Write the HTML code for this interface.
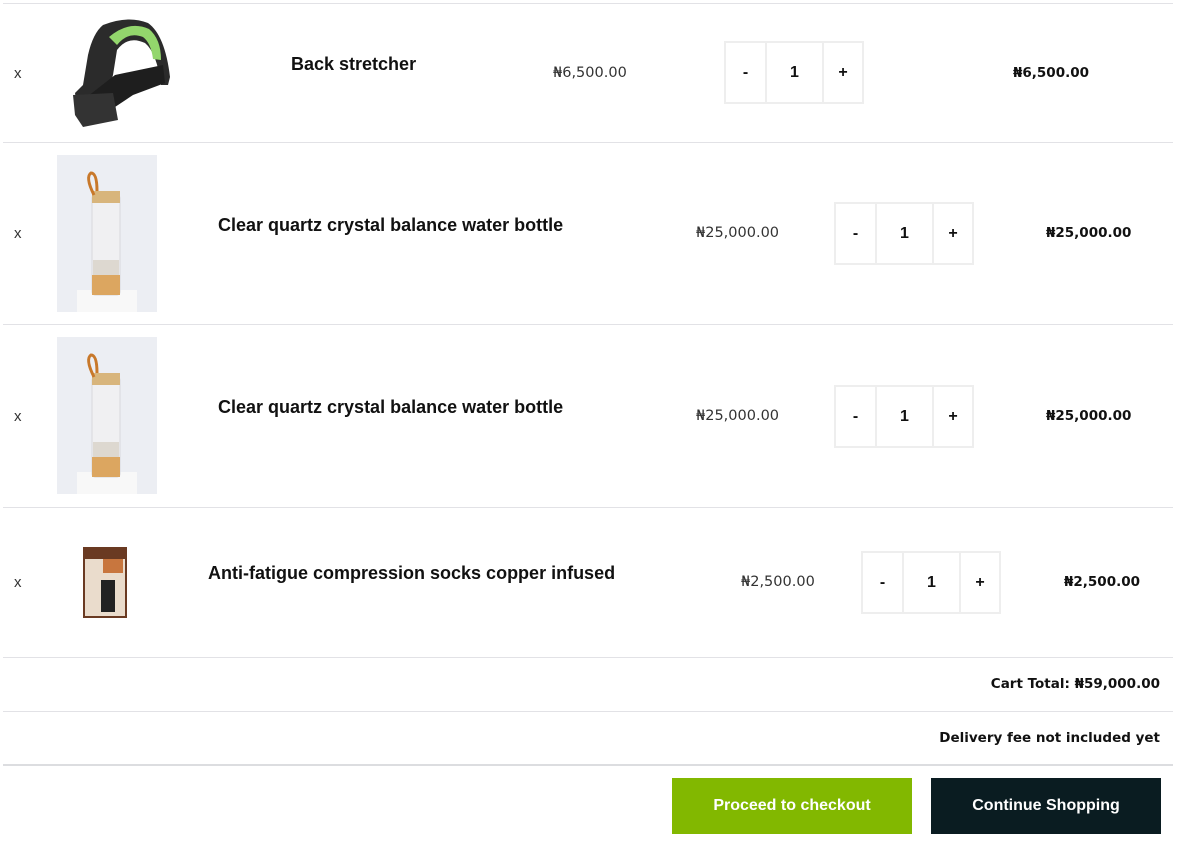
<!DOCTYPE html>
<html><head><meta charset="utf-8"><style>
body{margin:0;width:1181px;height:850px;background:#fff;position:relative;overflow:hidden;font-family:"DejaVu Sans","Liberation Sans",sans-serif;color:#1a1a1a}
.a{position:absolute;white-space:nowrap}
.hl{position:absolute;left:3px;width:1170px;height:1px;background:#e2e2e6}
.x{font-size:15px;color:#333;font-family:"Liberation Sans",sans-serif}
.n{font-family:"Liberation Sans",sans-serif;font-weight:bold;font-size:18px;color:#111}
.p{font-size:14.5px;color:#333}
.t{font-size:13.5px;font-weight:bold;color:#111}
.q{position:absolute;height:63px;border:2px solid #eee;display:flex;box-sizing:border-box;width:140px}
.q div{display:flex;align-items:center;justify-content:center;font-family:"Liberation Sans",sans-serif;font-weight:bold;font-size:16px;color:#111}
.q .m{width:39px}.q .v{width:55px;border-left:2px solid #eee;border-right:2px solid #eee}.q .pl{flex:1}
.btn{position:absolute;top:778px;height:56px;color:#fff;font-family:"Liberation Sans",sans-serif;font-weight:bold;font-size:16px;display:flex;align-items:center;justify-content:center}
</style></head><body>
<div class="hl" style="top:3px"></div>
<div class="hl" style="top:142px"></div>
<div class="hl" style="top:324px"></div>
<div class="hl" style="top:507px"></div>
<div class="hl" style="top:657px"></div>
<div class="hl" style="top:711px"></div>
<div class="hl" style="top:764px;height:2px;background:#dcdde0"></div>

<!-- row1 -->
<div class="a x" style="left:14px;top:65px">x</div>
<svg class="a" style="left:73px;top:15px" width="97" height="113" viewBox="0 0 97 113">
<path d="M30 10 Q55 0 75 8 Q92 20 97 62 L95 70 L88 70 Q84 38 72 28 Q55 20 44 35 L40 60 L30 95 L5 100 L2 78 L10 70 L15 40 Q20 18 30 10 Z" fill="#2b2b2b"/>
<path d="M36 22 Q56 5 76 14 Q88 24 88 45 L80 44 Q78 28 70 22 Q55 16 44 30 Z" fill="#93d66c"/>
<path d="M42 60 L90 50 L92 68 L60 80 L30 100 L8 100 L10 85 Z" fill="#1e1e1e"/>
<path d="M0 80 L40 78 L45 105 L10 112 L2 100 Z" fill="#333"/>
</svg>
<div class="a n" style="left:291px;top:54px">Back stretcher</div>
<div class="a p" style="left:553px;top:65px">₦6,500.00</div>
<div class="q" style="left:724px;top:41px"><div class="m">-</div><div class="v">1</div><div class="pl">+</div></div>
<div class="a t" style="left:1013px;top:65px">₦6,500.00</div>

<!-- row2 -->
<div class="a x" style="left:14px;top:225px">x</div>
<svg class="a" style="left:57px;top:155px" width="100" height="157" viewBox="0 0 100 157">
<rect width="100" height="157" fill="#eceef3"/><rect x="20" y="135" width="60" height="22" fill="#f8f8f8"/>
<rect x="35" y="40" width="28" height="100" rx="3" fill="#f0f0f2" stroke="#d8d8dc"/>
<rect x="35" y="36" width="28" height="12" fill="#d8b57c"/><rect x="35" y="120" width="28" height="20" fill="#dca660"/>
<rect x="36" y="105" width="26" height="15" fill="#ddd8d0"/>
<path d="M37 40 Q28 22 34 18 Q40 18 40 36" fill="none" stroke="#c8782a" stroke-width="3"/>
</svg>
<div class="a n" style="left:218px;top:215px">Clear quartz crystal balance water bottle</div>
<div class="a p" style="left:696px;top:225px">₦25,000.00</div>
<div class="q" style="left:834px;top:202px"><div class="m">-</div><div class="v">1</div><div class="pl">+</div></div>
<div class="a t" style="left:1046px;top:225px">₦25,000.00</div>

<!-- row3 -->
<div class="a x" style="left:14px;top:408px">x</div>
<svg class="a" style="left:57px;top:337px" width="100" height="157" viewBox="0 0 100 157">
<rect width="100" height="157" fill="#eceef3"/><rect x="20" y="135" width="60" height="22" fill="#f8f8f8"/>
<rect x="35" y="40" width="28" height="100" rx="3" fill="#f0f0f2" stroke="#d8d8dc"/>
<rect x="35" y="36" width="28" height="12" fill="#d8b57c"/><rect x="35" y="120" width="28" height="20" fill="#dca660"/>
<rect x="36" y="105" width="26" height="15" fill="#ddd8d0"/>
<path d="M37 40 Q28 22 34 18 Q40 18 40 36" fill="none" stroke="#c8782a" stroke-width="3"/>
</svg>
<div class="a n" style="left:218px;top:397px">Clear quartz crystal balance water bottle</div>
<div class="a p" style="left:696px;top:408px">₦25,000.00</div>
<div class="q" style="left:834px;top:385px"><div class="m">-</div><div class="v">1</div><div class="pl">+</div></div>
<div class="a t" style="left:1046px;top:408px">₦25,000.00</div>

<!-- row4 -->
<div class="a x" style="left:14px;top:574px">x</div>
<svg class="a" style="left:81px;top:545px" width="48" height="75" viewBox="0 0 48 75">
<rect x="2" y="2" width="44" height="71" fill="#6a3a22"/><rect x="4" y="14" width="40" height="57" fill="#eadccc"/>
<rect x="22" y="14" width="20" height="14" fill="#c8763e"/><rect x="20" y="35" width="14" height="32" fill="#222"/>
</svg>
<div class="a n" style="left:208px;top:563px">Anti-fatigue compression socks copper infused</div>
<div class="a p" style="left:741px;top:574px">₦2,500.00</div>
<div class="q" style="left:861px;top:551px"><div class="m">-</div><div class="v">1</div><div class="pl">+</div></div>
<div class="a t" style="left:1064px;top:574px">₦2,500.00</div>

<div class="a t" style="right:21px;top:676px">Cart Total: ₦59,000.00</div>
<div class="a t" style="right:21px;top:730px">Delivery fee not included yet</div>
<div class="btn" style="left:672px;width:240px;background:#82b800">Proceed to checkout</div>
<div class="btn" style="left:931px;width:230px;background:#0a1c21">Continue Shopping</div>
</body></html>
